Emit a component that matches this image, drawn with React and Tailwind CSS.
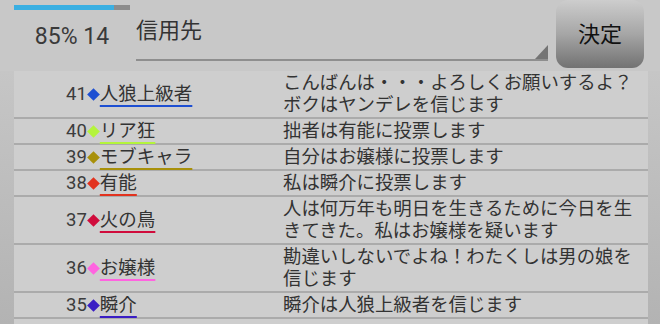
const rows = [
  { n: 41, color: '#1d4fd2', name: '人狼上級者', lines: ['こんばんは・・・よろしくお願いするよ？', 'ボクはヤンデレを信じます'] },
  { n: 40, color: '#b4f43c', name: 'リア狂', lines: ['拙者は有能に投票します'] },
  { n: 39, color: '#a8900a', name: 'モブキャラ', lines: ['自分はお嬢様に投票します'] },
  { n: 38, color: '#e2321e', name: '有能', lines: ['私は瞬介に投票します'] },
  { n: 37, color: '#d00c3c', name: '火の鳥', lines: ['人は何万年も明日を生きるために今日を生', 'きてきた。私はお嬢様を疑います'] },
  { n: 36, color: '#ff64e0', name: 'お嬢様', lines: ['勘違いしないでよね！わたくしは男の娘を', '信じます'] },
  { n: 35, color: '#3a1ec4', name: '瞬介', lines: ['瞬介は人狼上級者を信じます'] },
];

function Row({ row }) {
  return (
    <div className="flex border-b-2 border-[#ababab] py-[1px]">
      <div className="w-[269px] shrink-0 flex items-center pl-[52px]">
        <span className="text-[18.5px] leading-[22px] text-[#3c3c3c]">{row.n}</span>
        <span className="w-[13px] h-[12px] flex items-center justify-center">
          <span className="w-[9px] h-[9px] rotate-45" style={{ backgroundColor: row.color }} />
        </span>
        <span
          className="text-[18.5px] leading-[22px] text-[#333] underline decoration-2 underline-offset-[5px] whitespace-nowrap"
          style={{ textDecorationColor: row.color }}
        >
          {row.name}
        </span>
      </div>
      <div className="flex flex-col text-[18.4px] leading-[22px] text-[#333]">
        {row.lines.map((l, i) => (
          <span key={i} className="whitespace-nowrap">{l}</span>
        ))}
      </div>
    </div>
  );
}

export default function App() {
  return (
    <div className="w-[660px] h-[324px] overflow-hidden bg-[#c8c8c8] font-['Roboto','Noto_Sans_CJK_JP',sans-serif]">
      <header className="flex h-[71px]">
        <div className="ml-[14px] w-[116px] flex flex-col">
          <div className="mt-[5px] h-[5px] flex">
            <div className="w-[100px] bg-[#3aafe2]" />
            <div className="flex-1 bg-[#8c8c8c]" />
          </div>
          <div className="mt-[13px] text-center text-[23px] leading-[28px] text-[#3a3a3a]">85% 14</div>
        </div>
        <div className="ml-[6px] w-[412px] h-[61px] flex justify-between border-b-2 border-[#8e8e8e]">
          <div className="pt-[18px] text-[22px] leading-[26px] text-[#333]">信用先</div>
          <svg className="self-end" width="13" height="14" viewBox="0 0 13 14">
            <polygon points="13,0 13,14 0,14" fill="#747474" />
          </svg>
        </div>
        <button className="ml-[8px] w-[88px] h-[68px] rounded-[12px] bg-gradient-to-b from-[#cdcdcd] via-[#a6a6a6] to-[#727272] text-[22px] text-[#111] flex items-center justify-center">
          決定
        </button>
      </header>
      <div className="h-[253px] pl-[14px] pr-[12px] bg-gradient-to-b from-[#c6c6c6] to-[#b3b3b3]">
        <div className="bg-[#cecece] h-full">
          {rows.map((r) => (
            <Row key={r.n} row={r} />
          ))}
        </div>
      </div>
    </div>
  );
}
